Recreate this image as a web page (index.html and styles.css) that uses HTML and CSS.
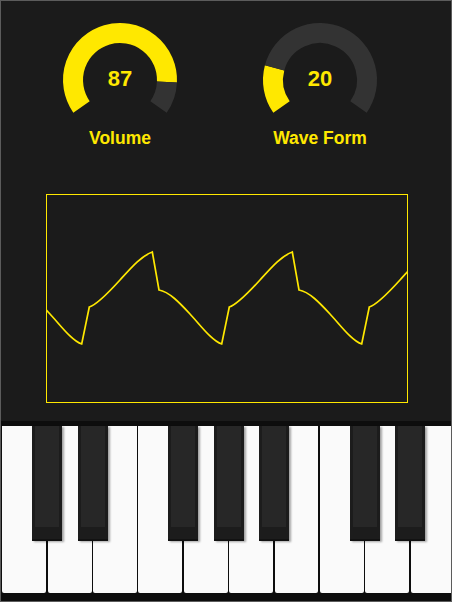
FILE: index.html
```html
<!DOCTYPE html>
<html>
<head>
<meta charset="utf-8">
<link rel="stylesheet" href="styles.css">
</head>
<body>
<div class="app">
  <div class="knobs">
    <div class="knob">
      <svg class="dial" width="120" height="96" viewBox="0 0 120 96">
        <path class="arc-on" d="M 21.5 86.96 A 47 47 0 1 1 106.96 62.05"/>
        <path class="arc-off" d="M 106.96 62.05 A 47 47 0 0 1 98.5 86.96"/>
        <text class="value" x="60" y="66">87</text>
      </svg>
      <div class="label">Volume</div>
    </div>
    <div class="knob">
      <svg class="dial" width="120" height="96" viewBox="0 0 120 96">
        <path class="arc-on" d="M 21.5 86.96 A 47 47 0 0 1 14.6 47.84"/>
        <path class="arc-off" d="M 14.6 47.84 A 47 47 0 1 1 98.5 86.96"/>
        <text class="value" x="60" y="66">20</text>
      </svg>
      <div class="label">Wave Form</div>
    </div>
  </div>

  <div class="scope">
    <svg class="wave" width="360" height="207" viewBox="0 0 360 207">
      <path d="M -105.3 149
        l 7.6 -37 c 7.7 -2.3 22.7 -18.2 30.7 -27 c 11 -12.1 21.3 -24.1 32.3 -28 l 6.7 38 c 10 1.5 21 13.2 31 24 c 10 10.8 22 27 31.7 30
        l 7.6 -37 c 7.7 -2.3 22.7 -18.2 30.7 -27 c 11 -12.1 21.3 -24.1 32.3 -28 l 6.7 38 c 10 1.5 21 13.2 31 24 c 10 10.8 22 27 31.7 30
        l 7.6 -37 c 7.7 -2.3 22.7 -18.2 30.7 -27 c 11 -12.1 21.3 -24.1 32.3 -28 l 6.7 38 c 10 1.5 21 13.2 31 24 c 10 10.8 22 27 31.7 30
        l 7.6 -37 c 7.7 -2.3 22.7 -18.2 30.7 -27 c 11 -12.1 21.3 -24.1 32.3 -28 l 6.7 38 c 10 1.5 21 13.2 31 24 c 10 10.8 22 27 31.7 30"/>
    </svg>
  </div>

  <div class="keyboard">
    <div class="whites">
      <div class="white"></div>
      <div class="white"></div>
      <div class="white"></div>
      <div class="white"></div>
      <div class="white"></div>
      <div class="white"></div>
      <div class="white"></div>
      <div class="white"></div>
      <div class="white"></div>
      <div class="white"></div>
    </div>
    <div class="black b1"></div>
    <div class="black b2"></div>
    <div class="black b3"></div>
    <div class="black b4"></div>
    <div class="black b5"></div>
    <div class="black b6"></div>
    <div class="black b7"></div>
  </div>
</div>
</body>
</html>
```

FILE: styles.css
```css
html, body {
  margin: 0;
  padding: 0;
  background: #1b1b1b;
}

.app {
  width: 452px;
  height: 602px;
  box-sizing: border-box;
  border: 1px solid #5c5c5c;
  background: #1b1b1b;
  display: flex;
  flex-direction: column;
  overflow: hidden;
  font-family: "Liberation Sans", Arial, sans-serif;
}

.knobs {
  display: flex;
  padding: 19px 0 0 19px;
}

.knob {
  width: 200px;
  display: flex;
  flex-direction: column;
  align-items: center;
}

.dial {
  display: block;
}

.arc-on, .arc-off {
  fill: none;
  stroke-width: 20;
}

.arc-on { stroke: #ffe800; }
.arc-off { stroke: #333333; }

.value {
  fill: #ffe800;
  font-family: "Liberation Sans", Arial, sans-serif;
  font-weight: bold;
  font-size: 22px;
  text-anchor: middle;
}

.label {
  margin-top: 12px;
  color: #ffe800;
  font-weight: bold;
  font-size: 17.5px;
  line-height: 20px;
}

.scope {
  margin: 46px 0 0 45px;
  width: 362px;
  height: 209px;
  box-sizing: border-box;
  border: 1px solid #ffe800;
}

.wave {
  display: block;
  overflow: hidden;
}

.wave path {
  fill: none;
  stroke: #ffe800;
  stroke-width: 1.7;
  stroke-linejoin: miter;
}

.keyboard {
  position: relative;
  margin-top: 18px;
  flex: 1;
  background: #0d0d0d;
  padding: 5px 0 8px 1.4px;
  display: flex;
  overflow: hidden;
}

.whites {
  display: flex;
  gap: 1.575px;
  flex: 1;
}

.white {
  flex: 0 0 43.8px;
  background: #fafafa;
  border-radius: 0 0 2px 2px;
}

.black {
  position: absolute;
  top: 5px;
  width: 30px;
  height: 115px;
  box-sizing: border-box;
  background: #1c1c1c;
  border-bottom: 2px solid #121212;
  box-shadow: 2px 1px 2px rgba(0, 0, 0, 0.35);
}

.black::before {
  content: "";
  position: absolute;
  left: 3px;
  right: 3px;
  top: 0;
  bottom: 12px;
  background: #272727;
}

.b1 { left: 31px; }
.b2 { left: 76.5px; }
.b3 { left: 167px; }
.b4 { left: 212.5px; }
.b5 { left: 258px; }
.b6 { left: 348.5px; }
.b7 { left: 394px; }
```
